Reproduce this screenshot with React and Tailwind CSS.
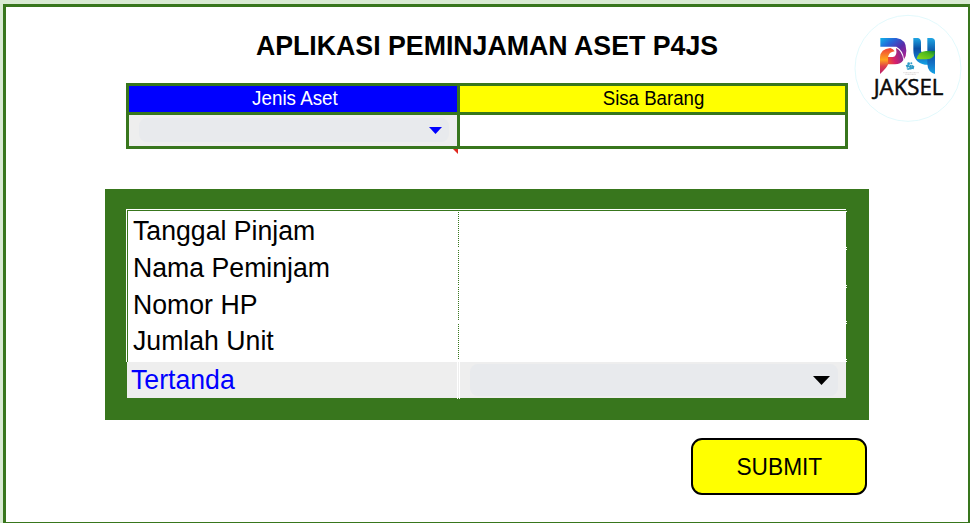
import React from 'react';

function Logo() {
  return (
    <svg viewBox="0 0 360 390" className="absolute left-[844px] top-[-7px] h-[130px] w-[120px]">
      <defs>
        <linearGradient id="top" x1="0" y1="0" x2="1" y2="1">
          <stop offset="0" stopColor="#10b4e8" />
          <stop offset="0.3" stopColor="#2565d8" />
          <stop offset="0.6" stopColor="#5a2ba8" />
          <stop offset="1" stopColor="#c0208c" />
        </linearGradient>
        <linearGradient id="low" x1="0" y1="0.6" x2="1" y2="0.3">
          <stop offset="0" stopColor="#f0542c" />
          <stop offset="0.4" stopColor="#d8206a" />
          <stop offset="1" stopColor="#6b2a9c" />
        </linearGradient>
        <linearGradient id="fold" x1="0" y1="0" x2="0" y2="1">
          <stop offset="0" stopColor="#ef3f3a" />
          <stop offset="0.45" stopColor="#ffa51c" />
          <stop offset="0.7" stopColor="#e0404a" />
          <stop offset="1" stopColor="#b81d6e" />
        </linearGradient>
        <linearGradient id="blue" x1="0" y1="0" x2="0" y2="1">
          <stop offset="0" stopColor="#1fa6e4" />
          <stop offset="0.4" stopColor="#0b4fa3" />
          <stop offset="0.7" stopColor="#1470c4" />
          <stop offset="1" stopColor="#14a4e6" />
        </linearGradient>
        <linearGradient id="green" x1="0" y1="1" x2="1" y2="0">
          <stop offset="0" stopColor="#8fdc1c" />
          <stop offset="0.65" stopColor="#4cb81e" />
          <stop offset="1" stopColor="#087a3c" />
        </linearGradient>
      </defs>
      <circle cx="174" cy="205" r="159" fill="#fff" stroke="#dcf8fb" strokeWidth="2.5" />
      <path d="M91 114H139Q169 117 169 152Q169 168 162 178Q160 151 139 140H91Z" fill="url(#top)" />
      <path d="M112 171H129Q143 169 138 144Q156 152 160 180Q152 193 135 193H110Z" fill="url(#low)" />
      <path d="M90 222V172Q91 147 121 144Q130 146 134 154Q116 156 114 172V193Q113 201 90 222Z" fill="url(#fold)" />
      <path d="M190 114H204Q213 116 213 127V152Q215 162 236 172V194H225Q190 188 190 150Z" fill="url(#blue)" />
      <path d="M232 114H246Q255 116 255 125V222Q233 216 232 192Z" fill="url(#blue)" />
      <path d="M200 177Q204 155 228 153H255V158Q252 177 226 178Q209 178 200 177Z" fill="url(#green)" />
      <g fill="#2f9bc8">
        <circle cx="176" cy="191" r="4" />
        <circle cx="184" cy="190" r="3" />
        <path d="M167 196l8-3 4 7-8 4zM179 194l6 1-1 14-7-2zM186 194l7 5-2 9-7-2zM169 206l6-2 5 4-6 2z" />
      </g>
      <path d="M160 218H206M166 223H198" stroke="#c9c3c3" strokeWidth="2" strokeDasharray="3 1" />
      <text
        x="71"
        y="284"
        textLength="209"
        lengthAdjust="spacingAndGlyphs"
        fontFamily="'Open Sans', 'Noto Sans', sans-serif"
        fontSize="67"
        fill="#0a0a0a"
        stroke="#0a0a0a"
        strokeWidth="1.5"
      >
        JAKSEL
      </text>
    </svg>
  );
}

function Caret({ className }) {
  return (
    <svg viewBox="0 0 18 9" preserveAspectRatio="none" className={className}>
      <path d="M0 0H18L9 9Z" fill="currentColor" />
    </svg>
  );
}

function AssetTable() {
  return (
    <div className="relative ml-[120px] mt-[76px] grid h-[66px] w-[722px] grid-cols-[328px_385px] grid-rows-[26px_31px] gap-[3px] bg-[#38761d] p-[3px] text-[19.3px] leading-[26px]">
      <div className="bg-[#0000ff] pl-[3px] text-center text-white">
        <span className="inline-block scale-x-[0.975]">Jenis Aset</span>
      </div>
      <div className="bg-[#ffff00] pl-[2px] text-center text-black">
        <span className="inline-block scale-x-[0.968]">Sisa Barang</span>
      </div>
      <div className="bg-[#eeeeee] pl-[10px] pr-[8px] pt-[3px]">
        <div className="flex h-[24px] items-center justify-end rounded-lg bg-[#e8eaed] pr-[7px]">
          <Caret className="h-[7px] w-[13px] text-[#0000ff]" />
        </div>
      </div>
      <div className="bg-white" />
      <svg viewBox="0 0 5 5" className="absolute left-[327px] top-[66px] h-[5px] w-[5px]">
        <path d="M0 0H5V5Z" fill="#e0281e" />
      </svg>
    </div>
  );
}

const ROWS = [
  { label: 'Tanggal Pinjam', box: 'h-[37px]', line: 'leading-[39px]', dots: 'mt-px h-[35px]' },
  { label: 'Nama Peminjam', box: 'h-[38px]', line: 'leading-[39px]', dots: 'mt-[2px] h-[35px]' },
  { label: 'Nomor HP', box: 'h-[36px]', line: 'leading-[37px]', dots: 'mt-px h-[33px]' },
  { label: 'Jumlah Unit', box: 'h-[40px]', line: 'leading-[37px]', dots: 'mt-[2px] h-[35px]' },
];

function LoanForm() {
  return (
    <div className="ml-[99px] mt-[40px] h-[231px] w-[764px] bg-[#38761d] pl-[21px] pt-[20px] text-[27.7px]">
      <div className="relative w-[720px] border-l border-t border-white">
        <div className="w-[719px] border-l border-t border-[#38761d] bg-white">
          {ROWS.map((row) => (
            <div key={row.label} className={'flex ' + row.box}>
              <div className={'w-[330px] whitespace-nowrap pl-[5px] ' + row.line}>
                <span className="inline-block origin-left scale-x-[0.963]">{row.label}</span>
              </div>
              <div
                className={
                  'w-px bg-[repeating-linear-gradient(to_bottom,#38761d_0px,#38761d_1px,#fff_1px,#fff_2px)] ' + row.dots
                }
              />
            </div>
          ))}
        </div>
        <svg viewBox="0 0 1 153" shapeRendering="crispEdges" className="absolute left-[719px] top-0 h-[153px] w-px">
          <path
            d="M0 2h1v1H0zM0 38h1v1H0zM0 40h1v1H0zM0 76h1v1H0zM0 78h1v1H0zM0 112h1v1H0zM0 114h1v1H0zM0 150h1v1H0zM0 152h1v1H0z"
            transform="translate(0 -1)"
            fill="#fff"
          />
        </svg>
      </div>
      <div className="ml-px flex h-[36px] w-[719px] bg-[#eeeeee]">
        <div className="w-[330px] pl-[4px] leading-[35px] text-[#0000ff]">
          <span className="inline-block origin-left scale-x-[0.963]">Tertanda</span>
        </div>
        <div className="h-[37px] w-[3px] border-x border-white" />
        <div className="ml-[10px] mt-[2px] flex h-[32px] w-[368px] items-center justify-end rounded-lg bg-[#e8eaed] pr-[8px]">
          <Caret className="h-[9px] w-[17px] text-black" />
        </div>
      </div>
    </div>
  );
}

export default function App() {
  return (
    <div className="h-[523px] w-[970px] overflow-hidden bg-[#d9ead3] pl-[3px] pt-[4px] font-['Liberation_Sans',Arial,sans-serif] text-black">
      <main className="relative flex h-[519px] w-[967px] flex-col border-b border-l-[3px] border-r-2 border-t-[3px] border-[#38761d] bg-white">
        <h1 className="absolute left-[120px] top-[22px] w-[722px] scale-x-[0.965] whitespace-nowrap text-center text-[27.7px] font-bold leading-[33px]">
          APLIKASI PEMINJAMAN ASET P4JS
        </h1>
        <Logo />
        <AssetTable />
        <LoanForm />
        <button className="ml-[685px] mt-[18px] h-[57px] w-[176px] rounded-[11px] border-[2px] border-black bg-[#ffff00] text-[24px]">
          <span className="inline-block scale-x-[0.945]">SUBMIT</span>
        </button>
      </main>
    </div>
  );
}
